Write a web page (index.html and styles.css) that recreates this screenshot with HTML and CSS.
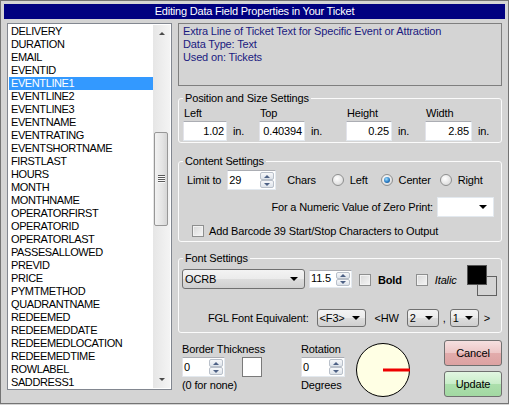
FILE: index.html
```html
<!DOCTYPE html>
<html>
<head>
    <title>Editing Data Field Properties in Your Ticket</title>
    <link rel="stylesheet" href="styles.css">
</head>
<body>
    <div class="window">
        <div class="titlebar">Editing Data Field Properties in Your Ticket</div>

        <div class="main">
            <div class="fieldlist">
                <ul class="items">
                    <li>DELIVERY</li>
                    <li>DURATION</li>
                    <li>EMAIL</li>
                    <li>EVENTID</li>
                    <li class="selected">EVENTLINE1</li>
                    <li>EVENTLINE2</li>
                    <li>EVENTLINE3</li>
                    <li>EVENTNAME</li>
                    <li>EVENTRATING</li>
                    <li>EVENTSHORTNAME</li>
                    <li>FIRSTLAST</li>
                    <li>HOURS</li>
                    <li>MONTH</li>
                    <li>MONTHNAME</li>
                    <li>OPERATORFIRST</li>
                    <li>OPERATORID</li>
                    <li>OPERATORLAST</li>
                    <li>PASSESALLOWED</li>
                    <li>PREVID</li>
                    <li>PRICE</li>
                    <li>PYMTMETHOD</li>
                    <li>QUADRANTNAME</li>
                    <li>REDEEMED</li>
                    <li>REDEEMEDDATE</li>
                    <li>REDEEMEDLOCATION</li>
                    <li>REDEEMEDTIME</li>
                    <li>ROWLABEL</li>
                    <li>SADDRESS1</li>
                </ul>
                <div class="scrollbar">
                    <div class="sb-btn"><span class="sb-up"></span></div>
                    <div class="sb-track">
                        <div class="sb-thumb"><span class="grip"></span></div>
                    </div>
                    <div class="sb-btn"><span class="sb-down"></span></div>
                </div>
            </div>

            <div class="panel">
                <div class="desc">
                    <div>Extra Line of Ticket Text for Specific Event or Attraction</div>
                    <div>Data Type: Text</div>
                    <div>Used on: Tickets</div>
                </div>

                <fieldset class="group pos">
                    <legend>Position and Size Settings</legend>
                    <div class="pos-grid">
                        <div>
                            <div class="lbl">Left</div>
                            <div class="measure"><span class="num w44">1.02</span><span class="unit">in.</span></div>
                        </div>
                        <div>
                            <div class="lbl">Top</div>
                            <div class="measure"><span class="num w46">0.40394</span><span class="unit">in.</span></div>
                        </div>
                        <div>
                            <div class="lbl">Height</div>
                            <div class="measure"><span class="num w46">0.25</span><span class="unit">in.</span></div>
                        </div>
                        <div>
                            <div class="lbl">Width</div>
                            <div class="measure"><span class="num w47">2.85</span><span class="unit">in.</span></div>
                        </div>
                    </div>
                </fieldset>

                <fieldset class="group content">
                    <legend>Content Settings</legend>
                    <div class="row limit-row">
                        <span class="limit-lbl">Limit to</span>
                        <div class="spin w49 limit-spin">
                            <span class="spin-val">29</span>
                            <span class="spin-btns"><span class="spin-up"></span><span class="spin-dn"></span></span>
                        </div>
                        <span class="chars">Chars</span>
                        <span class="opt opt-left"><span class="radio"></span>Left</span>
                        <span class="opt opt-center"><span class="radio on"></span>Center</span>
                        <span class="opt opt-right"><span class="radio"></span>Right</span>
                    </div>
                    <div class="row zero-row">
                        <span>For a Numeric Value of Zero Print:</span>
                        <div class="dropdown"><span class="arrow"></span></div>
                    </div>
                    <div class="row barcode-row">
                        <span class="check"></span>
                        <span class="check-lbl">Add Barcode 39 Start/Stop Characters to Output</span>
                    </div>
                </fieldset>

                <fieldset class="group font">
                    <legend>Font Settings</legend>
                    <div class="font-row">
                        <div class="combo font-combo"><span>OCRB</span><span class="arrow"></span></div>
                        <div class="spin size-spin">
                            <span class="spin-val">11.5</span>
                            <span class="spin-btns"><span class="spin-up"></span><span class="spin-dn"></span></span>
                        </div>
                        <span class="check bold-check"></span>
                        <span class="style-lbl bold">Bold</span>
                        <span class="check italic-check"></span>
                        <span class="style-lbl italic">Italic</span>
                        <div class="swatch">
                            <span class="swatch-back"></span>
                            <span class="swatch-fore"></span>
                        </div>
                    </div>
                    <div class="fgl-row">
                        <span>FGL Font Equivalent:</span>
                        <div class="combo fgl-combo"><span>&lt;F3&gt;</span><span class="arrow"></span></div>
                        <span class="hw">&lt;HW</span>
                        <div class="combo hw-combo"><span>2</span><span class="arrow"></span></div>
                        <span class="comma">,</span>
                        <div class="combo hw-combo2"><span>1</span><span class="arrow"></span></div>
                        <span class="close">&gt;</span>
                    </div>
                </fieldset>

                <div class="bottom">
                    <div class="border-col">
                        <div class="lbl">Border Thickness</div>
                        <div class="row spin-row">
                            <div class="spin w43">
                                <span class="spin-val">0</span>
                                <span class="spin-btns"><span class="spin-up"></span><span class="spin-dn"></span></span>
                            </div>
                            <span class="border-box"></span>
                        </div>
                        <div class="lbl">(0 for none)</div>
                    </div>
                    <div class="rot-col">
                        <div class="lbl">Rotation</div>
                        <div class="row spin-row">
                            <div class="spin w44">
                                <span class="spin-val">0</span>
                                <span class="spin-btns"><span class="spin-up"></span><span class="spin-dn"></span></span>
                            </div>
                        </div>
                        <div class="lbl">Degrees</div>
                    </div>
                    <svg class="dial" width="54" height="54" viewBox="0 0 54 54">
                        <circle cx="27" cy="27" r="26.5" fill="#ffffe4" stroke="#000" stroke-width="1"/>
                        <line x1="27" y1="27" x2="54" y2="27" stroke="#ee0000" stroke-width="3"/>
                    </svg>
                    <div class="buttons">
                        <div class="btn cancel">Cancel</div>
                        <div class="btn update">Update</div>
                    </div>
                </div>
            </div>
        </div>
    </div>
</body>
</html>
```

FILE: styles.css
```css
* {
    box-sizing: border-box;
}
body {
    margin: 0;
    font-family: "Liberation Sans", Arial, sans-serif;
    font-size: 11px;
    letter-spacing: -0.15px;
    color: #000;
    background: #d4d4d4;
}
.window {
    width: 509px;
    height: 404px;
    border: 1px solid #747474;
    background: #d4d4d4;
    padding: 3px 3px 0;
}
.titlebar {
    height: 15px;
    line-height: 15px;
    background: #000080;
    color: #fff;
    text-align: center;
    letter-spacing: -0.2px;
}
.main {
    display: flex;
    margin-top: 4px;
    padding-left: 3px;
}

/* field list */
.fieldlist {
    width: 165px;
    height: 367px;
    border: 1px solid #828790;
    background: #fff;
    padding: 1px;
    display: flex;
}
.items {
    flex: 1;
    list-style: none;
    margin: 0;
    padding: 0;
    overflow: hidden;
    letter-spacing: -0.4px;
}
.items li {
    height: 13px;
    line-height: 13px;
    padding-left: 2px;
    white-space: nowrap;
}
.items li.selected {
    background: #3399ff;
    color: #fff;
}
.scrollbar {
    width: 17px;
    display: flex;
    flex-direction: column;
    background: linear-gradient(to right, #e6e6e6, #f4f4f4);
}
.sb-btn {
    height: 17px;
    display: flex;
    align-items: center;
    justify-content: center;
}
.sb-up {
    border-left: 3px solid transparent;
    border-right: 3px solid transparent;
    border-bottom: 3px solid #4a4a4a;
}
.sb-down {
    border-left: 3px solid transparent;
    border-right: 3px solid transparent;
    border-top: 3px solid #4a4a4a;
}
.sb-track {
    flex: 1;
}
.sb-thumb {
    margin: 90px 2px 0 1px;
    height: 94px;
    border: 1px solid #979797;
    border-radius: 2px;
    background: linear-gradient(to right, #f2f2f2, #e4e4e4 60%, #d6d6d6);
    display: flex;
    align-items: center;
    justify-content: center;
}
.grip {
    width: 7px;
    height: 8px;
    background: repeating-linear-gradient(#5a5a5a 0, #5a5a5a 1px, #fafafa 1px, #fafafa 2px);
}

/* right panel */
.panel {
    width: 324px;
    margin-left: 6px;
    display: flex;
    flex-direction: column;
}
.desc {
    height: 63px;
    border: 1px solid #7f7f7f;
    padding: 1px 4px 0;
    color: #1a1a80;
    line-height: 13px;
}
.group {
    margin: 0;
    border: 1px solid #fbfbfb;
    border-radius: 3px;
    padding: 0 4px;
}
.group legend {
    padding: 0 2px;
    line-height: 13px;
}
.lbl {
    line-height: 13px;
    white-space: nowrap;
}
.row {
    display: flex;
    align-items: center;
}

/* position and size */
.pos {
    margin-top: 6px;
    padding-top: 2px;
    padding-bottom: 1px;
}
.pos-grid {
    display: grid;
    grid-template-columns: 76px 87px 79px auto;
}
.pos-grid .lbl {
    padding-left: 1px;
}
.measure {
    display: flex;
    align-items: center;
    margin-top: 1px;
}
.num {
    height: 20px;
    line-height: 18px;
    background: #fff;
    border: 1px solid;
    border-color: #abadb3 #e3e9ef #e3e9ef #e2e3ea;
    text-align: right;
    padding-right: 2px;
}
.unit {
    margin-left: 6px;
}
.w43 { width: 43px; }
.w44 { width: 44px; }
.w46 { width: 46px; }
.w47 { width: 47px; }
.w49 { width: 49px; }

/* spinners */
.spin {
    display: flex;
    height: 20px;
    background: #fff;
    border: 1px solid;
    border-color: #abadb3 #e3e9ef #e3e9ef #e2e3ea;
}
.spin-val {
    flex: 1;
    padding-left: 1px;
    line-height: 18px;
}
.spin-btns {
    width: 15px;
    display: flex;
    flex-direction: column;
    padding: 1px 1px 1px 0;
}
.spin-up,
.spin-dn {
    flex: 1;
    border: 1px solid #b9c0ca;
    border-radius: 2px;
    background: linear-gradient(#f7f8fa, #dde3ea);
    display: flex;
    align-items: center;
    justify-content: center;
}
.spin-up::before {
    content: "";
    border-left: 3px solid transparent;
    border-right: 3px solid transparent;
    border-bottom: 3px solid #4d6185;
}
.spin-dn::before {
    content: "";
    border-left: 3px solid transparent;
    border-right: 3px solid transparent;
    border-top: 3px solid #4d6185;
}

/* content settings */
.content {
    margin-top: 12px;
    padding-top: 2px;
    padding-bottom: 4px;
}
.limit-row {
    height: 20px;
}
.limit-lbl {
    margin-left: 4px;
}
.limit-spin {
    margin-left: 6px;
}
.chars {
    margin-left: 11px;
}
.opt {
    display: flex;
    align-items: center;
    gap: 6px;
}
.opt-left { margin-left: 16px; }
.opt-center { margin-left: 13px; }
.opt-right { margin-left: 9px; }
.radio {
    width: 12px;
    height: 12px;
    border-radius: 50%;
    border: 1px solid #8e8f8f;
    background: radial-gradient(circle at 40% 35%, #ffffff, #e6e6e6 55%, #cfcfcf);
    display: flex;
    align-items: center;
    justify-content: center;
}
.radio.on::after {
    content: "";
    width: 6px;
    height: 6px;
    border-radius: 50%;
    background: radial-gradient(circle at 40% 35%, #9fe0ff, #2a7cc4 55%, #0d3e75);
}
.zero-row {
    justify-content: flex-end;
    margin-top: 7px;
    padding-right: 3px;
}
.dropdown {
    width: 57px;
    height: 20px;
    margin-left: 4px;
    background: #fff;
    border: 1px solid #e3e9ef;
    display: flex;
    align-items: center;
    justify-content: flex-end;
    padding-right: 6px;
}
.arrow {
    border-left: 4px solid transparent;
    border-right: 4px solid transparent;
    border-top: 4px solid #000;
}
.barcode-row {
    margin-top: 7px;
    height: 13px;
    padding-left: 9px;
}
.check {
    width: 12px;
    height: 12px;
    border: 1px solid #8e8f8f;
    background: linear-gradient(135deg, #d8d8d8, #f6f6f6);
    box-shadow: inset 0 0 0 1px #f2f2f2;
}
.check-lbl {
    margin-left: 5px;
}

/* font settings */
.font {
    margin-top: 10px;
    padding-bottom: 5px;
}
.font-row {
    display: flex;
    align-items: flex-start;
    height: 31px;
}
.combo {
    height: 20px;
    border: 1px solid #707070;
    border-radius: 3px;
    background: linear-gradient(#f3f3f3 0, #ebebeb 50%, #dddddd 50%, #cfcfcf 100%);
    display: flex;
    align-items: center;
    justify-content: space-between;
    padding: 0 6px 0 2px;
}
.font-combo {
    width: 123px;
    margin-left: -1px;
    margin-top: 4px;
}
.size-spin {
    width: 43px;
    height: 18px;
    margin-left: 4px;
    margin-top: 5px;
}
.size-spin .spin-val {
    line-height: 14px;
}
.bold-check {
    margin-left: 7px;
    margin-top: 9px;
}
.style-lbl {
    line-height: 13px;
    margin-top: 9px;
    margin-left: 7px;
}
.bold {
    font-weight: bold;
}
.italic {
    font-style: italic;
}
.italic-check {
    margin-left: 14px;
    margin-top: 9px;
}
.swatch {
    position: relative;
    width: 30px;
    height: 31px;
    margin-left: auto;
}
.swatch-back {
    position: absolute;
    left: 10px;
    top: 11px;
    width: 20px;
    height: 20px;
    border: 1px solid #606060;
}
.swatch-fore {
    position: absolute;
    left: 0;
    top: 0;
    width: 20px;
    height: 20px;
    background: #000;
    border: 1px solid #555;
}
.fgl-row {
    display: flex;
    align-items: center;
    height: 18px;
    margin-top: 13px;
    padding-left: 25px;
}
.fgl-row .combo {
    height: 18px;
    padding-right: 5px;
}
.fgl-combo {
    width: 49px;
    margin-left: 8px;
}
.hw {
    margin-left: 9px;
}
.hw-combo {
    width: 32px;
    margin-left: 8px;
}
.comma {
    margin-left: 4px;
}
.hw-combo2 {
    width: 29px;
    margin-left: 4px;
}
.close {
    margin-left: 5px;
}

/* bottom area */
.bottom {
    display: flex;
    align-items: flex-start;
    margin-top: 7px;
    padding-left: 4px;
}
.border-col {
    width: 119px;
    margin-top: 3px;
}
.rot-col {
    width: 55px;
    margin-top: 3px;
}
.spin-row {
    margin-top: 1px;
    margin-bottom: 2px;
}
.border-box {
    width: 20px;
    height: 20px;
    margin-left: 17px;
    background: #fff;
    border: 1px solid #7a7a7a;
}
.dial {
    display: block;
    margin-top: 3px;
}
.buttons {
    margin-left: auto;
    display: flex;
    flex-direction: column;
    gap: 5px;
}
.btn {
    width: 58px;
    height: 26px;
    line-height: 24px;
    text-align: center;
    border: 1px solid #707070;
    border-radius: 3px;
}
.cancel {
    background: linear-gradient(#f6e0e0 0, #edc6c6 50%, #e2acac 50%, #dca2a2 100%);
}
.update {
    background: linear-gradient(#e2f6e2 0, #c8edc8 50%, #acdfac 50%, #a2d9a2 100%);
}
```
